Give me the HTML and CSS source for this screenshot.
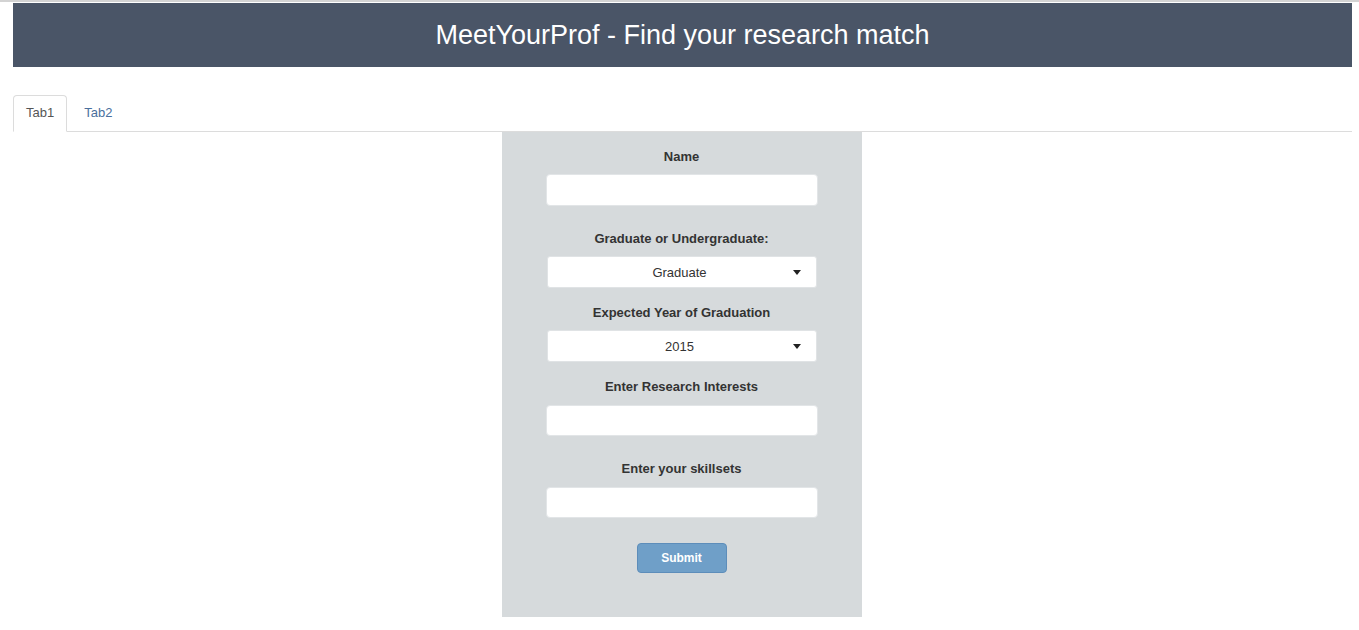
FILE: index.html
```html
<!DOCTYPE html>
<html>
<head>
<meta charset="utf-8">
<link rel="stylesheet" href="styles.css">
</head>
<body>
<div class="topline"></div>
<div class="page">
  <header class="banner"><h1>MeetYourProf - Find your research match</h1></header>
  <ul class="tabs">
    <li class="tab active">Tab1</li>
    <li class="tab">Tab2</li>
  </ul>
  <div class="content">
    <form class="panel">
      <label class="lbl">Name</label>
      <input class="field" type="text">
      <label class="lbl lbl-gap">Graduate or Undergraduate:</label>
      <div class="select"><span>Graduate</span><i class="caret"></i></div>
      <label class="lbl lbl-gap-s">Expected Year of Graduation</label>
      <div class="select"><span>2015</span><i class="caret"></i></div>
      <label class="lbl lbl-gap-s">Enter Research Interests</label>
      <input class="field field-s" type="text">
      <label class="lbl lbl-gap">Enter your skillsets</label>
      <input class="field field-s" type="text">
      <button class="submit" type="button">Submit</button>
    </form>
  </div>
</div>
</body>
</html>
```
FILE: styles.css
```css
* { box-sizing: border-box; }
html, body { margin: 0; padding: 0; background: #fff; }
body { font-family: "Liberation Sans", Arial, sans-serif; font-size: 13px; color: #333; }
.topline { height: 2px; background: #d3d3d3; margin-bottom: 1px; }
.page { width: 1339px; margin-left: 13px; }
.banner { height: 64px; background: #4a5567; display: flex; align-items: center; justify-content: center; }
.banner h1 { margin: 0; font-weight: normal; font-size: 27px; color: #fff; line-height: 1; }
.tabs { list-style: none; margin: 28px 0 0; padding: 0; display: flex; border-bottom: 1px solid #dcdcdc; }
.tab { height: 37px; padding: 0 12px; line-height: 33px; color: #4a6f9d; border: 1px solid transparent; border-radius: 4px 4px 0 0; margin-bottom: -1px; margin-right: 4px; }
.tab.active { color: #555; border-color: #dcdcdc; border-bottom-color: #fff; background: #fff; }
.content { display: flex; justify-content: center; padding-right: 2px; }
.panel { width: 360px; height: 485px; background: #d6dadc; display: flex; flex-direction: column; align-items: center; padding-top: 15px; }
.lbl { font-weight: bold; line-height: 20px; height: 20px; color: #333; }
.lbl-gap { margin-top: 23px; }
.lbl-gap-s { margin-top: 15px; }
.field { width: 272px; height: 32px; margin-top: 7px; border: 1px solid #e2e5e7; border-radius: 4px; background: #fff; font: inherit; padding: 0 10px; }
.field-s { height: 31px; margin-top: 8px; }
.select { position: relative; width: 270px; height: 32px; margin-top: 7px; background: #fff; border: 1px solid #e0e3e5; border-radius: 3px; display: flex; align-items: center; justify-content: center; color: #333; }
.select span { position: relative; left: -2px; }
.caret { position: absolute; right: 15px; top: 13px; width: 0; height: 0; border-left: 4.5px solid transparent; border-right: 4.5px solid transparent; border-top: 5px solid #222; }
.submit { margin-top: 25px; width: 90px; height: 30px; background: #6f9fc8; border: 1px solid #5d8dba; border-radius: 4px; color: #fff; font: bold 12px "Liberation Sans", Arial, sans-serif; }
```
